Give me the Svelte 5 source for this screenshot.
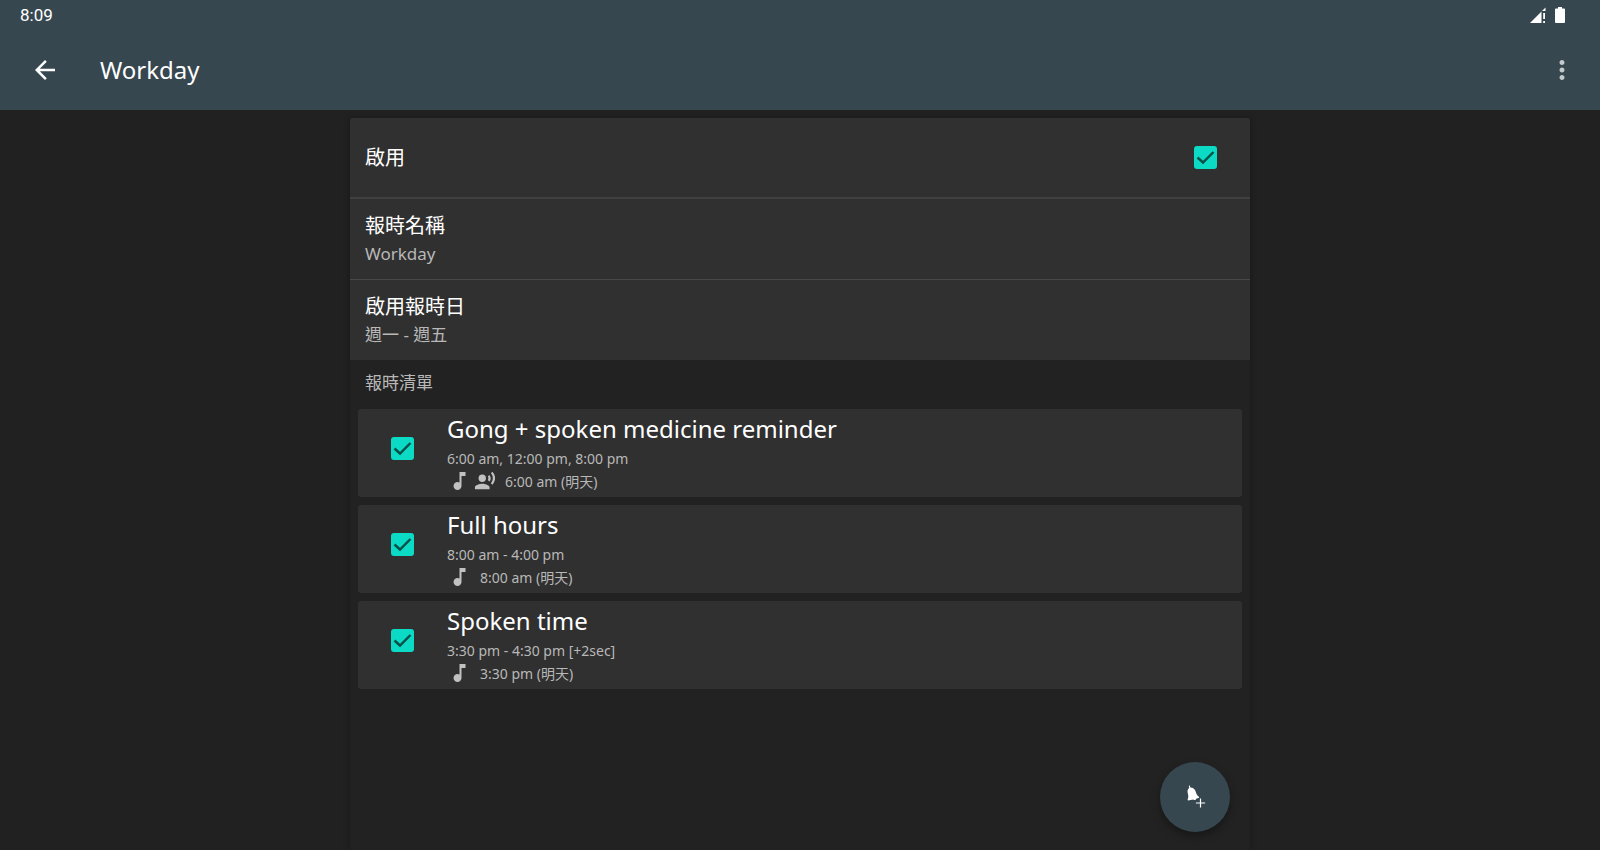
<script>
  let enabled = $state(true);

  const settings = [
    { title: "報時名稱", value: "Workday" },
    { title: "啟用報時日", value: "週一 - 週五" }
  ];

  let chimes = $state([
    { name: "Gong + spoken medicine reminder", times: "6:00 am, 12:00 pm, 8:00 pm", next: "6:00 am (明天)", spoken: true, on: true },
    { name: "Full hours", times: "8:00 am - 4:00 pm", next: "8:00 am (明天)", spoken: false, on: true },
    { name: "Spoken time", times: "3:30 pm - 4:30 pm [+2sec]", next: "3:30 pm (明天)", spoken: false, on: true }
  ]);
</script>

<div class="screen">
  <header>
    <div class="status">
      <span>8:09</span>
      <div class="status-icons">
        <svg width="16" height="16" viewBox="0 0 16 16" fill="#fff">
          <path d="M0 16 L11.5 4.5 V16 Z" />
          <path d="M12 4 L15.5 .5 V4 Z" />
          <path d="M13.2 6 h1.8 v6 h-1.8 z M13.2 14 h1.8 v2 h-1.8 z" />
        </svg>
        <svg width="10" height="16" viewBox="0 0 10 16" fill="#fff">
          <path d="M3 0 h4 v1.5 h2 a1 1 0 0 1 1 1 V15 a1 1 0 0 1 -1 1 H1 a1 1 0 0 1 -1 -1 V2.5 a1 1 0 0 1 1 -1 h2 z" />
        </svg>
      </div>
    </div>
    <div class="toolbar">
      <button class="icon-button" aria-label="Back">
        <svg width="30" height="30" viewBox="0 0 24 24" fill="#fff">
          <path d="M20 11H7.83l5.59-5.59L12 4l-8 8 8 8 1.41-1.41L7.83 13H20v-2z" />
        </svg>
      </button>
      <h1>Workday</h1>
      <button class="icon-button" aria-label="More options">
        <svg width="30" height="30" viewBox="0 0 24 24" fill="#c3cace">
          <path d="M12 8c1.1 0 2-.9 2-2s-.9-2-2-2-2 .9-2 2 .9 2 2 2zm0 2c-1.1 0-2 .9-2 2s.9 2 2 2 2-.9 2-2-.9-2-2-2zm0 6c-1.1 0-2 .9-2 2s.9 2 2 2 2-.9 2-2-.9-2-2-2z" />
        </svg>
      </button>
    </div>
  </header>

  <main>
    <section class="settings">
      <label class="setting enable">
        <span class="title">啟用</span>
        <input type="checkbox" bind:checked={enabled}>
      </label>
      {#each settings as setting}
        <button class="setting">
          <span class="title">{setting.title}</span>
          <span class="value">{setting.value}</span>
        </button>
      {/each}
    </section>

    <h2>報時清單</h2>

    <ul>
      {#each chimes as chime, i}
        <li>
          <input type="checkbox" id="chime-{i}" bind:checked={chime.on}>
          <label for="chime-{i}">
            <span class="name">{chime.name}</span>
            <span class="times">{chime.times}</span>
            <span class="next">
              <svg width="25" height="24" viewBox="0 0 24 24" fill="#c1c1c1">
                <path d="M12 3v10.55c-.59-.34-1.27-.55-2-.55-2.21 0-4 1.79-4 4s1.79 4 4 4 4-1.79 4-4V7h4V3h-6z" />
              </svg>
              {#if chime.spoken}
                <svg class="voice" width="22" height="22" viewBox="0 0 24 24" fill="#c1c1c1">
                  <circle cx="9" cy="9" r="4" />
                  <path d="M9 15c-2.67 0-8 1.34-8 4v2h16v-2c0-2.66-5.33-4-8-4zm7.76-9.64l-1.68 1.69c.84 1.18.84 2.71 0 3.89l1.68 1.69c2.02-2.02 2.02-5.07 0-7.27zM20.07 2l-1.63 1.63c2.77 3.02 2.77 7.56 0 10.74L20.07 16c3.9-3.89 3.91-9.95 0-14z" />
                </svg>
              {/if}
              <span class="next-time">{chime.next}</span>
            </span>
          </label>
        </li>
      {/each}
    </ul>

    <button class="fab" aria-label="Add chime">
      <svg width="30" height="30" viewBox="0 0 30 30" fill="#fff">
        <path d="M8.8 3.8 L9.8 3.6 L10.3 5.6 C13.2 5.6 15 7.2 15.8 10 C16.4 12.4 17.2 13.6 19.2 15 L18.8 16 L16.4 16.6 A1.7 1.7 0 0 1 13.4 17.4 L8 18.6 L7.6 17.6 C8.6 15.2 8.4 13.6 7.8 11.4 C7.2 9 7.6 7 9.2 6 Z" />
        <path d="M19.9 16.4 h1.2 v4 h4 v1.2 h-4 v4 h-1.2 v-4 h-4 v-1.2 h4 z" />
      </svg>
    </button>
  </main>
</div>

<style>
  :global(body) {
    margin: 0;
    background: #212121;
  }

  .screen {
    display: flex;
    flex-direction: column;
    min-height: 100vh;
    color: #fff;
    font-family: "Noto Sans", "Noto Sans CJK TC", sans-serif;
  }

  button {
    border: none;
    padding: 0;
    background: none;
    color: inherit;
    font: inherit;
    text-align: left;
    cursor: pointer;
  }

  svg {
    display: block;
  }

  header {
    background: #37474f;
  }

  .status {
    display: flex;
    justify-content: space-between;
    align-items: center;
    height: 30px;
    padding: 0 35px 0 20px;
    font-family: Roboto, sans-serif;
    font-size: 17px;
  }

  .status-icons {
    display: flex;
    gap: 9px;
  }

  .toolbar {
    display: flex;
    align-items: center;
    height: 80px;
    padding: 0 23px 0 30px;
  }

  .icon-button {
    width: 30px;
    height: 30px;
  }

  h1 {
    flex: 1;
    margin: 0;
    padding-left: 40px;
    font-size: 24px;
    font-weight: 400;
    line-height: 32px;
  }

  main {
    position: relative;
    flex: 1;
    box-sizing: border-box;
    width: 100%;
    max-width: 900px;
    margin: 8px auto 0;
    background: #222;
    border-radius: 3px;
    box-shadow: 0 1px 6px rgba(0, 0, 0, 0.3);
  }

  .settings {
    overflow: hidden;
    border-radius: 3px 3px 0 0;
  }

  .setting {
    display: flex;
    flex-direction: column;
    justify-content: center;
    box-sizing: border-box;
    width: 100%;
    height: 81px;
    padding: 0 15px;
    background: #303030;
    border-bottom: 1px solid #484848;
  }

  .setting:last-child {
    height: 80px;
    border-bottom: none;
  }

  .setting.enable {
    flex-direction: row;
    align-items: center;
    justify-content: space-between;
    padding-right: 33px;
    border-bottom: 2px solid #404040;
  }

  .title {
    font-size: 20px;
    line-height: 30px;
  }

  .value {
    color: #b8b8b8;
    font-size: 17px;
    line-height: 26px;
  }

  h2 {
    margin: 0;
    padding: 0 15px;
    color: #b8b8b8;
    font-size: 17px;
    font-weight: 400;
    line-height: 45px;
  }

  ul {
    display: flex;
    flex-direction: column;
    gap: 8px;
    margin: 4px 8px 0;
    padding: 0;
    list-style: none;
  }

  li {
    display: flex;
    align-items: center;
    gap: 33px;
    height: 88px;
    padding-left: 33px;
    background: #303030;
    border-radius: 3px;
  }

  input {
    appearance: none;
    flex: none;
    width: 23px;
    height: 23px;
    margin: 0 0 10px;
    border: 2px solid #b8b8b8;
    border-radius: 3px;
    cursor: pointer;
  }

  .enable input {
    margin-bottom: 0;
  }

  input:checked {
    border: none;
    background: #0bdac5 url("data:image/svg+xml,%3Csvg xmlns='http://www.w3.org/2000/svg' viewBox='0 0 23 23'%3E%3Cpath d='M3.5 11.5 L9 16.5 L19.5 6' fill='none' stroke='%23064f48' stroke-width='2.4'/%3E%3C/svg%3E") center / 23px 23px;
  }

  label {
    cursor: pointer;
  }

  li label {
    display: flex;
    flex: 1;
    flex-direction: column;
    padding-bottom: 3px;
  }

  .name {
    font-size: 24px;
    line-height: 36px;
  }

  .times {
    color: #b8b8b8;
    font-size: 14px;
    line-height: 23px;
  }

  .next {
    display: flex;
    align-items: center;
    height: 23px;
    color: #b8b8b8;
    font-size: 14px;
    line-height: 23px;
  }

  .voice {
    margin: 0 1px 0 2px;
  }

  .next-time {
    padding-left: 8px;
  }

  .fab {
    position: absolute;
    right: 20px;
    bottom: 18px;
    display: flex;
    align-items: center;
    justify-content: center;
    width: 70px;
    height: 70px;
    background: #37474f;
    border-radius: 50%;
    box-shadow: 0 4px 8px rgba(0, 0, 0, 0.35);
  }
</style>
